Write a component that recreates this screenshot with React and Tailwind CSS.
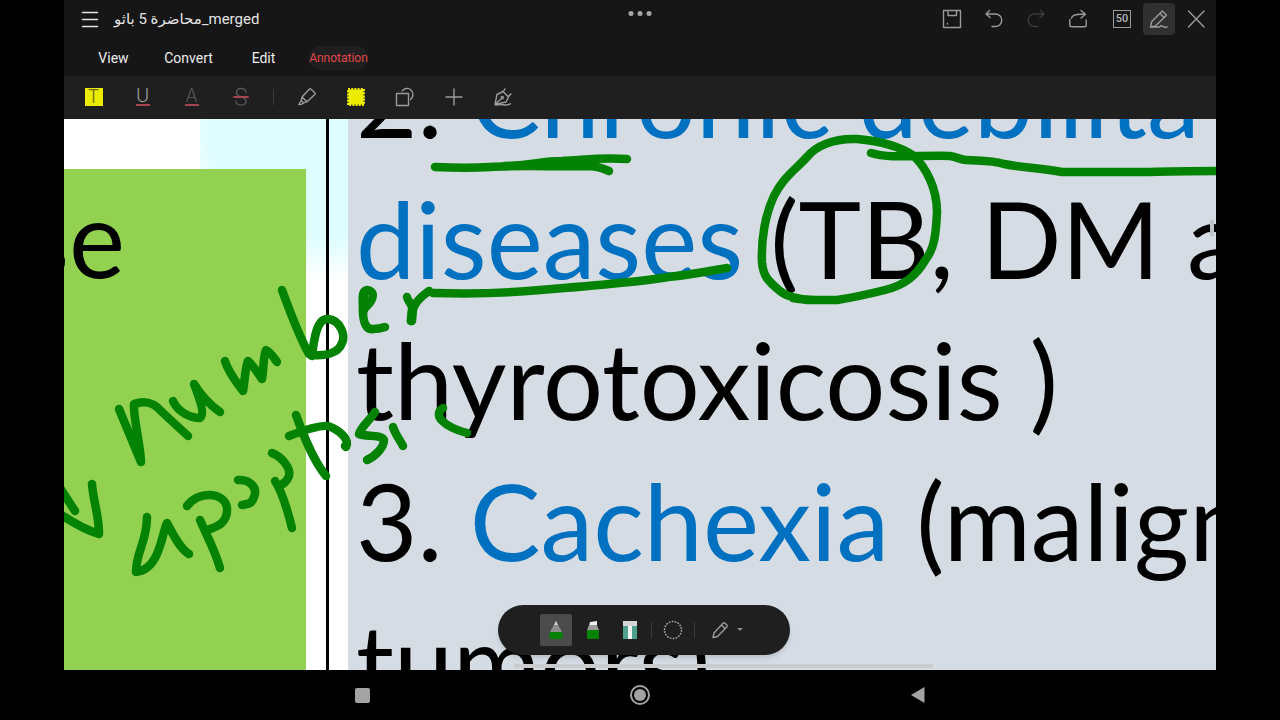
import React, { useState } from 'react';

const tabs = ['View', 'Convert', 'Edit', 'Annotation'];

const strokes = [
    // underlines and the ring
    'M435 167 C455 168 475 168 490 167 C520 165 560 167 585 166 C597 166 602 168 609 171',
    'M505 166 C535 165 540 161 562 161 C585 160 600 157 627 159',
    'M540 164 L592 162',
    'M433 293 C470 294 500 294 540 290 C590 286 640 282 668 277 C690 275 710 271 727 268',
    'M871 153 C890 159 920 155 950 156 C958 157 960 160 966 160 C980 161 990 160 1004 164 C1025 168 1040 168 1062 172 C1090 172 1130 172 1150 172 C1175 171 1190 171 1217 171',
    'M806 300 C798 298 788 298 780 291 C768 281 763 276 762 262 C761 240 765 215 774 196 C783 178 793 172 807 157 C815 147 832 138 857 139 C880 141 901 147 914 156 C926 168 937 188 937 212 C936 235 934 249 926 259 C916 276 905 285 885 290 C865 295 850 298 837 300 C825 300 810 301 793 298',
    // number
    'M119 409 L141 462 C140 440 133 418 134 404 C148 399 156 405 162 412 L188 436',
    'M173 401 C178 412 190 418 200 418 C206 414 197 392 194 384 C200 394 210 405 220 412',
    'M225 361 C229 374 238 384 243 391 C245 380 245 368 248 361 C254 366 258 374 262 379 C264 368 263 357 266 350 C270 351 274 358 277 362',
    'M282 290 C290 312 300 338 309 354 L312 356 C314 338 317 318 328 319 C340 320 346 335 342 343 C338 354 324 356 312 355',
    'M365 308 C375 299 375 291 367 290 C361 291 363 301 363 311 C363 324 367 330 373 329 C378 329 382 328 385 327',
    'M364 293 L363 312 L366 304',
    'M407 297 C408 302 413 305 412 309 L411 321',
    'M411 321 C411 308 416 300 429 291',
    'M413 309 L412 321',
    // apoptosis
    'M60 488 L75 511',
    'M60 514 C72 522 86 530 99 534 C99 515 93 500 92 484',
    'M147 517 C147 542 136 552 136 572 C160 570 162 532 167 523 C172 532 179 548 189 554',
    'M200 520 C206 534 215 550 220 568',
    'M187 506 C198 490 225 492 227 508 C228 523 217 527 207 530',
    'M238 480 C250 479 258 488 254 497 C252 504 248 504 242 505',
    'M275 481 C281 490 287 508 292 528',
    'M272 453 C282 457 291 468 289 476 C287 482 283 484 279 486',
    'M296 415 C304 437 313 460 326 476',
    'M289 436 C302 431 320 425 328 426 C340 430 350 440 346 447 L345 446',
    'M375 412 C370 420 361 427 359 434 C366 437 381 434 384 440 C384 447 376 456 367 460',
    'M393 427 C395 434 400 440 403 446',
    'M443 408 C432 415 444 427 467 433',
];

function IconButton({ label, className = 'w-8', children }) {
    return (
        <button aria-label={label} className={`flex h-8 shrink-0 items-center justify-center ${className}`}>
            {children}
        </button>
    );
}

function Icon({ size = 20, className = 'text-[#9a9a9a]', children }) {
    return (
        <svg
            width={size}
            height={size}
            viewBox="0 0 20 20"
            fill="none"
            stroke="currentColor"
            strokeWidth="1.4"
            strokeLinecap="round"
            strokeLinejoin="round"
            className={className}
        >
            {children}
        </svg>
    );
}

function TitleBar() {
    return (
        <div className="relative flex h-10 items-center pr-1 pb-0.5 pl-2.5">
            <IconButton label="Menu">
                <Icon className="text-[#e4e4e4]">
                    <path d="M2.5 3.5h15M2.5 10.5h15M2.5 17.5h15" />
                </Icon>
            </IconButton>
            <h1 className="pl-2 text-[15px] text-[#e4e4e4]">محاضرة 5 باثو_merged</h1>
            <button aria-label="Window options" className="absolute top-[11px] left-1/2 flex h-1 -translate-x-1/2 gap-1">
                <span className="size-[5px] rounded-full bg-[#a6a6a6]" />
                <span className="size-[5px] rounded-full bg-[#a6a6a6]" />
                <span className="size-[5px] rounded-full bg-[#a6a6a6]" />
            </button>
            <div className="ml-auto flex gap-2.5">
                <IconButton label="Save">
                    <Icon>
                        <path d="M1.500 1.500h17v17h-17zM6 1.500v5h8.500v-5M5.500 14.500v.500" />
                    </Icon>
                </IconButton>
                <IconButton label="Undo">
                    <Icon>
                        <path d="M5.500 1.500L2 5l4 3.500M2 5h9.500a6.200 6.200 0 0 1 0 12.500H8" />
                    </Icon>
                </IconButton>
                <IconButton label="Redo">
                    <Icon className="text-[#3c3c3c]">
                        <path d="M14.500 1.500L18 5l-4 3.500M18 5H8.500a6.200 6.200 0 0 0 0 12.500H12" />
                    </Icon>
                </IconButton>
                <IconButton label="Share">
                    <Icon>
                        <path d="M13 1.500l4.500 3.800-4.500 3.700M17 5.300h-4C7 5.300 4 7 3.500 9M1.800 10.500v5.500q0 1.800 1.800 1.800h12.800q1.800 0 1.800-1.800v-5" />
                    </Icon>
                </IconButton>
            </div>
            <div className="ml-3 flex gap-[5px]">
                <IconButton label="Page 50">
                    <span className="flex size-[18px] items-center justify-center border border-[#9a9a9a] text-[11px] font-medium text-[#b4b4b4]">
                        50
                    </span>
                </IconButton>
                <IconButton label="Pen mode" className="w-8 rounded bg-[#303030]">
                    <Icon>
                        <path d="M1.500 18l1.300-5.500L13.300 2l4.200 4.200L6.500 17zM11 4.500l4.200 4.200M1.500 18h9q1.800-2 3.500-.500t4 .300" />
                    </Icon>
                </IconButton>
                <IconButton label="Close">
                    <Icon>
                        <path d="M2.500 2l15.500 16M18 2L2.500 18" />
                    </Icon>
                </IconButton>
            </div>
        </div>
    );
}

function TextTool({ letter, className }) {
    return (
        <span className={`flex h-[18px] items-center justify-center font-[Inter] text-lg font-light ${className}`}>{letter}</span>
    );
}

function AnnotationBar() {
    return (
        <div className="flex h-[43px] items-center bg-[#1f1f1f] pb-0.5 pl-[5px]">
            <IconButton label="Highlight text" className="w-[49px]">
                <TextTool letter="T" className="w-[18px] bg-[#ecec00] text-[#6b6b12]" />
            </IconButton>
            <IconButton label="Underline" className="w-[49px]">
                <TextTool letter="U" className="w-3.5 border-b-2 border-[#a84350] text-[#9a9a9a]" />
            </IconButton>
            <IconButton label="Text colour" className="w-[49px]">
                <TextTool letter="A" className="w-3.5 border-b-2 border-[#a84350] text-[#555555]" />
            </IconButton>
            <IconButton label="Strikethrough" className="w-[49px]">
                <Icon className="text-[#555555]">
                    <path d="M15 5.500C14.500 0 5.500.500 5.500 5.500c0 2.500 2 3.500 4.500 4.300 3 .900 5.200 2 5.200 4.500 0 5.200-10 5.200-10.400-.300" />
                    <path d="M3 10h14" stroke="#a84350" strokeWidth="1.800" />
                </Icon>
            </IconButton>
            <span className="mx-2 h-4 w-px bg-[#3a3a3a]" />
            <IconButton label="Marker" className="w-[49px]">
                <Icon>
                    <path d="M12.300 2.200q.900-.900 1.800 0l3.700 3.500q.900.900 0 1.800L10 14.700l-5-4.800zM5 9.900l-.800 3.600 2.500 2.400 3.300-1.200M4.200 13.500l-2.400 4 2.800-.300 2.100-1.300" />
                </Icon>
            </IconButton>
            <IconButton label="Area highlight" className="w-[49px]">
                <svg width="20" height="20" viewBox="0 0 20 20">
                    <rect x="2.500" y="2.500" width="15" height="15" fill="#ecec00" />
                    <rect x="2" y="2" width="16" height="16" fill="none" stroke="#ecec00" strokeWidth="2" strokeDasharray="2 1.200" />
                </svg>
            </IconButton>
            <IconButton label="Shapes" className="w-[49px]">
                <Icon>
                    <path d="M1.500 6.500h12v12h-12zM7 4c1.800-3 6.500-3.500 9-1 3 3 2.200 7.500-.500 9.500" />
                </Icon>
            </IconButton>
            <IconButton label="Add" className="w-[49px]">
                <Icon>
                    <path d="M10 2v16M2 10h16" />
                </Icon>
            </IconButton>
            <IconButton label="Signature" className="w-[49px]">
                <Icon>
                    <path d="M2 17.500L4 7.500l6-3 5.500 5.500-2.500 5zM2 17.500l6.500-6M9.500 4.500q1.500-.200 2.500-2.500M15.500 10q.500-2 2.500-3M3 18q4-1 7.500-.200t7-1" />
                    <circle cx="9.300" cy="10.600" r="1.100" />
                </Icon>
            </IconButton>
        </div>
    );
}

function Page() {
    return (
        <div className="flex h-full bg-[radial-gradient(circle_at_264px_0px,#defdff_0px,#defdff_118px,#ffffff_162px)] font-[Lato] text-[106px] leading-[141px] whitespace-pre text-black">
            <div className="flex w-[242px] shrink-0 flex-col">
                <div className="h-[50px] w-[136px] bg-white" />
                <div className="flex flex-1 justify-end overflow-hidden bg-[#92d250] pr-[181px]">
                    <p className="-mt-0.5">se</p>
                </div>
            </div>
            <div className="ml-5 w-[3px] shrink-0 bg-black" />
            <div className="ml-[19px] min-w-0 flex-1 overflow-hidden bg-[#d5dce4] pl-2">
                <div className="-mt-[92px]">
                    <p>2. <span className="text-[#0070c0]">Chronic debilita</span></p>
                    <p><span className="text-[#0070c0]">diseases</span> (TB, DM a</p>
                    <p>thyrotoxicosis )</p>
                    <p>3. <span className="text-[#0070c0]">Cachexia</span> (malign</p>
                    <p>tumors)</p>
                </div>
            </div>
        </div>
    );
}

function Ink() {
    return (
        <svg
            className="pointer-events-none absolute top-0 left-0 h-[551px] w-[1152px]"
            viewBox="64 119 1152 551"
            fill="none"
            stroke="#048204"
            strokeWidth="8.5"
            strokeLinecap="round"
            strokeLinejoin="round"
        >
            {strokes.map((d) => (
                <path key={d} d={d} />
            ))}
        </svg>
    );
}

function PenPalette() {
    return (
        <div className="absolute inset-x-0 bottom-[15px] flex justify-center pl-2">
            <div className="flex h-[50px] w-[292px] items-center rounded-full bg-[#1f1f1f] pl-[42px] shadow-md">
                <IconButton label="Pen" className="mr-[5px] w-8 rounded-xs bg-[#4b4b4b]">
                    <svg width="20" height="20" viewBox="0 0 20 20">
                        <path d="M10 1L4 12h12z" fill="#8d8d8d" />
                        <path d="M10 1L8 5h4z" fill="#cfcfcf" />
                        <path d="M3.500 12h13v6.500q-6.500 1-13 0z" fill="#048204" />
                    </svg>
                </IconButton>
                <IconButton label="Highlighter" className="mr-[5px] w-8">
                    <svg width="20" height="20" viewBox="0 0 20 20">
                        <path d="M7 2l7-1v5H6z" fill="#efefef" />
                        <path d="M6 5h8l2 5H4z" fill="#9b9b9b" />
                        <path d="M4 10h12v9H4z" fill="#048204" />
                    </svg>
                </IconButton>
                <IconButton label="Eraser" className="w-8">
                    <svg width="20" height="20" viewBox="0 0 20 20">
                        <path d="M3 5h14v14H3z" fill="#4fa08c" />
                        <path d="M8 5h4v14H8z" fill="#f2f2f2" />
                        <path d="M3 1h14v5H3z" fill="#d6d6d6" />
                    </svg>
                </IconButton>
                <span className="mx-[5px] h-4 w-px bg-[#3a3a3a]" />
                <IconButton label="Lasso">
                    <svg width="20" height="20" viewBox="0 0 20 20">
                        <circle cx="10" cy="10" r="8.500" fill="none" stroke="#a6a6a6" strokeWidth="1.500" strokeDasharray="1.700 1.260" />
                    </svg>
                </IconButton>
                <span className="mx-[5px] h-4 w-px bg-[#3a3a3a]" />
                <button aria-label="Pencil options" className="ml-2.5 flex h-8 items-center gap-[7px]">
                    <Icon>
                        <path d="M3 17.500l1-4.500L13 3.300q1-1 2 0l1.800 1.800q1 1 0 2L7.500 16.500zM11.500 5l3.700 3.700" />
                    </Icon>
                    <svg width="6" height="4" viewBox="0 0 6 4">
                        <path d="M0 0h6L3 3z" fill="#8a8a8a" />
                    </svg>
                </button>
            </div>
        </div>
    );
}

function SystemNav() {
    return (
        <nav className="flex h-[50px] items-center justify-center gap-[246px]">
            <IconButton label="Recent apps">
                <span className="size-[15px] rounded-xs bg-[#a3a3a3]" />
            </IconButton>
            <IconButton label="Home">
                <span className="flex size-5 items-center justify-center rounded-full border-2 border-[#a3a3a3]">
                    <span className="size-3 rounded-full bg-[#a3a3a3]" />
                </span>
            </IconButton>
            <IconButton label="Back">
                <svg width="16" height="18" viewBox="0 0 16 18">
                    <path d="M14.500 1v16L1 9z" fill="#a3a3a3" />
                </svg>
            </IconButton>
        </nav>
    );
}

export default function App() {
    const [active, setActive] = useState('Annotation');

    return (
        <div className="flex h-screen flex-col bg-black px-16 font-[Roboto,'Noto_Sans','DejaVu_Sans',sans-serif]">
            <header className="bg-[#161616]">
                <TitleBar />
                <div className="flex h-9 items-center pl-3">
                    {tabs.map((tab) => (
                        <button
                            key={tab}
                            onClick={() => setActive(tab)}
                            className={`flex h-6 w-[75px] items-center justify-center ${
                                active === tab ? 'text-xs text-[#e2474f]' : 'text-sm text-[#ececec]'
                            }`}
                        >
                            <span className={active === tab ? 'rounded-full bg-[#1f1f1f] py-1' : ''}>{tab}</span>
                        </button>
                    ))}
                </div>
                <AnnotationBar />
            </header>
            <main className="relative min-h-0 flex-1 overflow-hidden">
                <Page />
                <Ink />
                <div className="absolute top-[101px] right-0.5 h-4 w-1 bg-[#bfc3c8]" />
                <div className="absolute bottom-0.5 left-[450px] h-1 w-[419px] bg-[#c9cbcd]" />
                <PenPalette />
            </main>
            <SystemNav />
        </div>
    );
}
